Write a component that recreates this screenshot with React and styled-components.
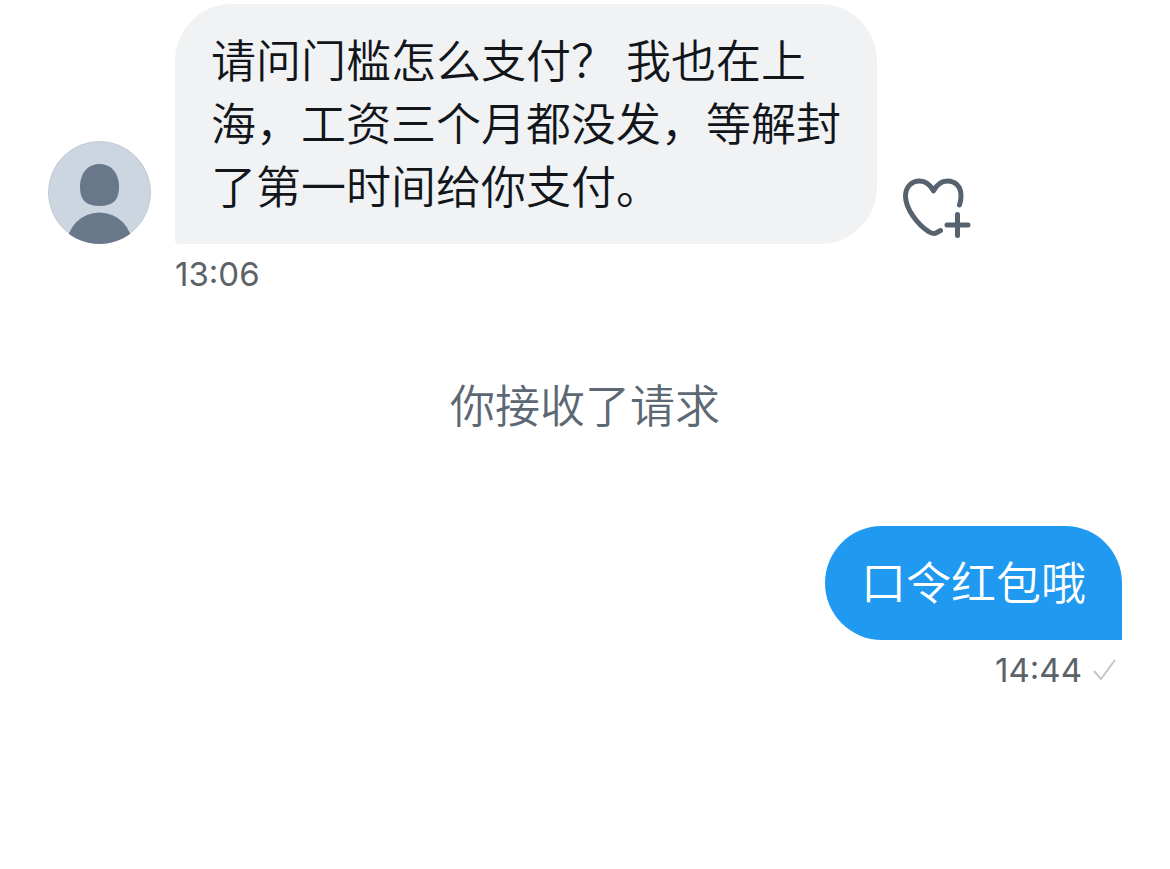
import styled, { createGlobalStyle } from 'styled-components';

export default function App() {
  return (
    <>
      <GlobalStyle />
      <Conversation>
        <Message>
          <Row>
            <Avatar />
            <Bubble>
              请问门槛怎么支付？ 我也在上海，工资三个月都没发，等解封了第一时间给你支付。
            </Bubble>
            <LikeButton type='button' aria-label='喜欢'>
              <HeartPlus />
            </LikeButton>
          </Row>
          <Meta>
            <Time dateTime='13:06'>13:06</Time>
          </Meta>
        </Message>

        <Notice>你接收了请求</Notice>

        <Message $sent>
          <Bubble $sent>口令红包哦</Bubble>
          <Meta $sent>
            <Time dateTime='14:44'>14:44</Time>
            <Check />
          </Meta>
        </Message>
      </Conversation>
    </>
  )
}

function Avatar() {
  return (
    <AvatarSvg viewBox='0 0 103 103' aria-hidden='true'>
      <defs>
        <clipPath id='avatar-circle'>
          <circle cx='51.5' cy='51.5' r='51.5' />
        </clipPath>
      </defs>
      <circle cx='51.5' cy='51.5' r='51' fill='#ccd6e0' stroke='#c3c9d3' />
      <g clipPath='url(#avatar-circle)' fill='#687789'>
        <path d='M51.5 23C63 23 71 32 71 46C71 59 65 65 51.5 65C38 65 32 59 32 46C32 32 40 23 51.5 23Z' />
        <ellipse cx='51.5' cy='105' rx='33' ry='33.5' />
      </g>
    </AvatarSvg>
  )
}

function HeartPlus() {
  return (
    <HeartSvg viewBox='0 0 70 64' aria-hidden='true'>
      <path d='M58.5 29C59.5 26 60 23 60 20C60 10 54 5 46.5 5C40 5 35.5 9 32.5 15C29.5 9 25 5 18.5 5C10.5 5 4.5 11 4.5 20C4.5 33 17 49 27.5 55.5Q32 58.5 35 57L39.5 54.5' />
      <path d='M56.5 38.5V59.5M46 49H67' />
    </HeartSvg>
  )
}

function Check() {
  return (
    <CheckSvg viewBox='0 0 26 26' aria-hidden='true'>
      <path d='M2 14L9 22L23 3' />
    </CheckSvg>
  )
}

const GlobalStyle = createGlobalStyle`
  * {
    box-sizing: border-box;
  }
  body {
    margin: 0;
    background: #fff;
    font-family: Inter, 'Noto Sans CJK SC', sans-serif;
  }
`;

const Conversation = styled.main`
  display: flex;
  flex-direction: column;
  padding: 4px 48px;
`;

const Message = styled.div`
  display: flex;
  flex-direction: column;
  align-items: ${({ $sent }) => ($sent ? 'flex-end' : 'flex-start')};
`;

const Row = styled.div`
  display: flex;
  align-items: flex-end;
  gap: 24px;
`;

const Bubble = styled.p`
  max-width: 702px;
  margin: 0;
  padding: 23px 36px 28px;
  border-radius: ${({ $sent }) => ($sent ? '57px 57px 0 57px' : '57px 57px 57px 4px')};
  background: ${({ $sent }) => ($sent ? '#2099f0' : '#f0f2f4')};
  color: ${({ $sent }) => ($sent ? '#fff' : '#12161b')};
  font-family: 'Noto Sans CJK SC', sans-serif;
  font-size: 45px;
  font-weight: 350;
  line-height: 63px;
`;

const LikeButton = styled.button`
  display: flex;
  padding: 0 0 4px;
  border: 0;
  background: none;
  cursor: pointer;
`;

const Meta = styled.div`
  display: flex;
  align-items: center;
  gap: 10px;
  margin-top: 10px;
  padding: ${({ $sent }) => ($sent ? '0 4px 0 0' : '0 0 0 127px')};
`;

const Time = styled.time`
  color: #5b6369;
  font-size: 33px;
  line-height: 40px;
`;

const Notice = styled.p`
  margin: 78px 0 91px;
  color: #5d6875;
  font-family: 'Noto Sans CJK SC', sans-serif;
  font-size: 45px;
  font-weight: 350;
  line-height: 63px;
  text-align: center;
`;

const AvatarSvg = styled.svg`
  flex: none;
  width: 103px;
  height: 103px;
`;

const HeartSvg = styled.svg`
  width: 70px;
  height: 64px;
  fill: none;
  stroke: #56636f;
  stroke-width: 5;
  stroke-linecap: round;
  stroke-linejoin: round;
`;

const CheckSvg = styled.svg`
  width: 26px;
  height: 26px;
  fill: none;
  stroke: #c2c6ca;
  stroke-width: 2;
`;
